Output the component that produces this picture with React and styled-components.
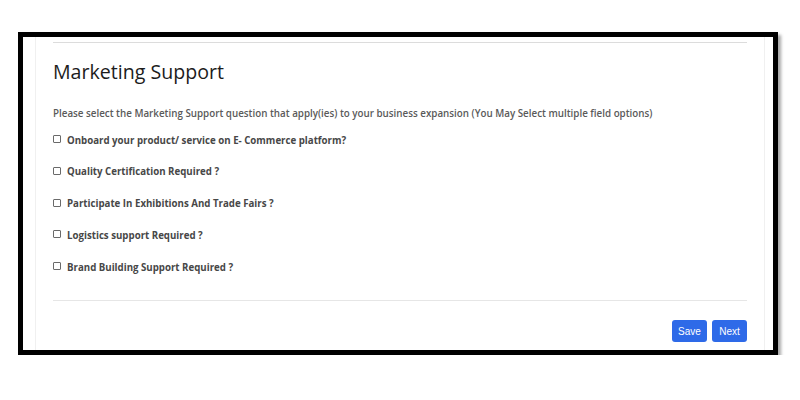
import React from 'react';
import styled, { createGlobalStyle } from 'styled-components';

const GlobalStyle = createGlobalStyle`
  body {
    margin: 0;
    background: #fff;
    font-family: "Open Sans", "Liberation Sans", sans-serif;
  }
`;

const Frame = styled.div`
  margin: 32px 0 0 18px;
  width: 760px;
  height: 323px;
  box-sizing: border-box;
  border: 5px solid #000;
  box-shadow: 3px 3px 3px rgba(0, 0, 0, 0.35);
  background: #fff;
  display: flex;
  overflow: hidden;
`;

const Panel = styled.div`
  flex: 1;
  margin: 0 8px 0 12px;
  border-left: 1px solid #f0f0f0;
  border-right: 1px solid #f0f0f0;
  padding: 0 17px;
  display: flex;
  flex-direction: column;
`;

const Rule = styled.hr`
  border: 0;
  border-top: 1px solid ${(p) => p.$color || '#dcdcdc'};
  margin: ${(p) => p.$margin};
`;

const Title = styled.h2`
  margin: 15px 0 0;
  font-size: 19.6px;
  font-weight: 500;
  color: #1c1c1c;
`;

const Intro = styled.p`
  margin: 22px 0 0;
  font-size: 9.8px;
  font-weight: 600;
  color: #5a5a5a;
`;

const Options = styled.div`
  display: flex;
  flex-direction: column;
  gap: 15.75px;
  margin-top: 12px;
`;

const Option = styled.label`
  display: flex;
  align-items: center;
  gap: 6px;
  font-size: 9.7px;
  font-weight: 700;
  color: #474747;
  height: 16px;
`;

const Box = styled.span`
  width: 6px;
  height: 6px;
  border: 1px solid #6a6a6a;
  border-radius: 1px;
  margin-top: -2px;
`;

const Actions = styled.div`
  display: flex;
  justify-content: flex-end;
  gap: 5px;
`;

const Button = styled.button`
  width: 35px;
  height: 22px;
  padding: 0;
  border: 0;
  border-radius: 3px;
  background: #2e6ae8;
  color: #fff;
  font-family: "Liberation Sans", sans-serif;
  font-size: 10px;
`;

const questions = [
  'Onboard your product/ service on E- Commerce platform?',
  'Quality Certification Required ?',
  'Participate In Exhibitions And Trade Fairs ?',
  'Logistics support Required ?',
  'Brand Building Support Required ?',
];

export default function App() {
  return (
    <>
      <GlobalStyle />
      <Frame>
        <Panel>
          <Rule $margin="5px 0 0" />
          <Title>Marketing Support</Title>
          <Intro>
            Please select the Marketing Support question that apply(ies) to your business
            expansion (You May Select multiple field options)
          </Intro>
          <Options>
            {questions.map((q) => (
              <Option key={q}>
                <Box />
                {q}
              </Option>
            ))}
          </Options>
          <Rule $color="#e6e6e6" $margin="25px 0 19px" />
          <Actions>
            <Button>Save</Button>
            <Button>Next</Button>
          </Actions>
        </Panel>
      </Frame>
    </>
  );
}
